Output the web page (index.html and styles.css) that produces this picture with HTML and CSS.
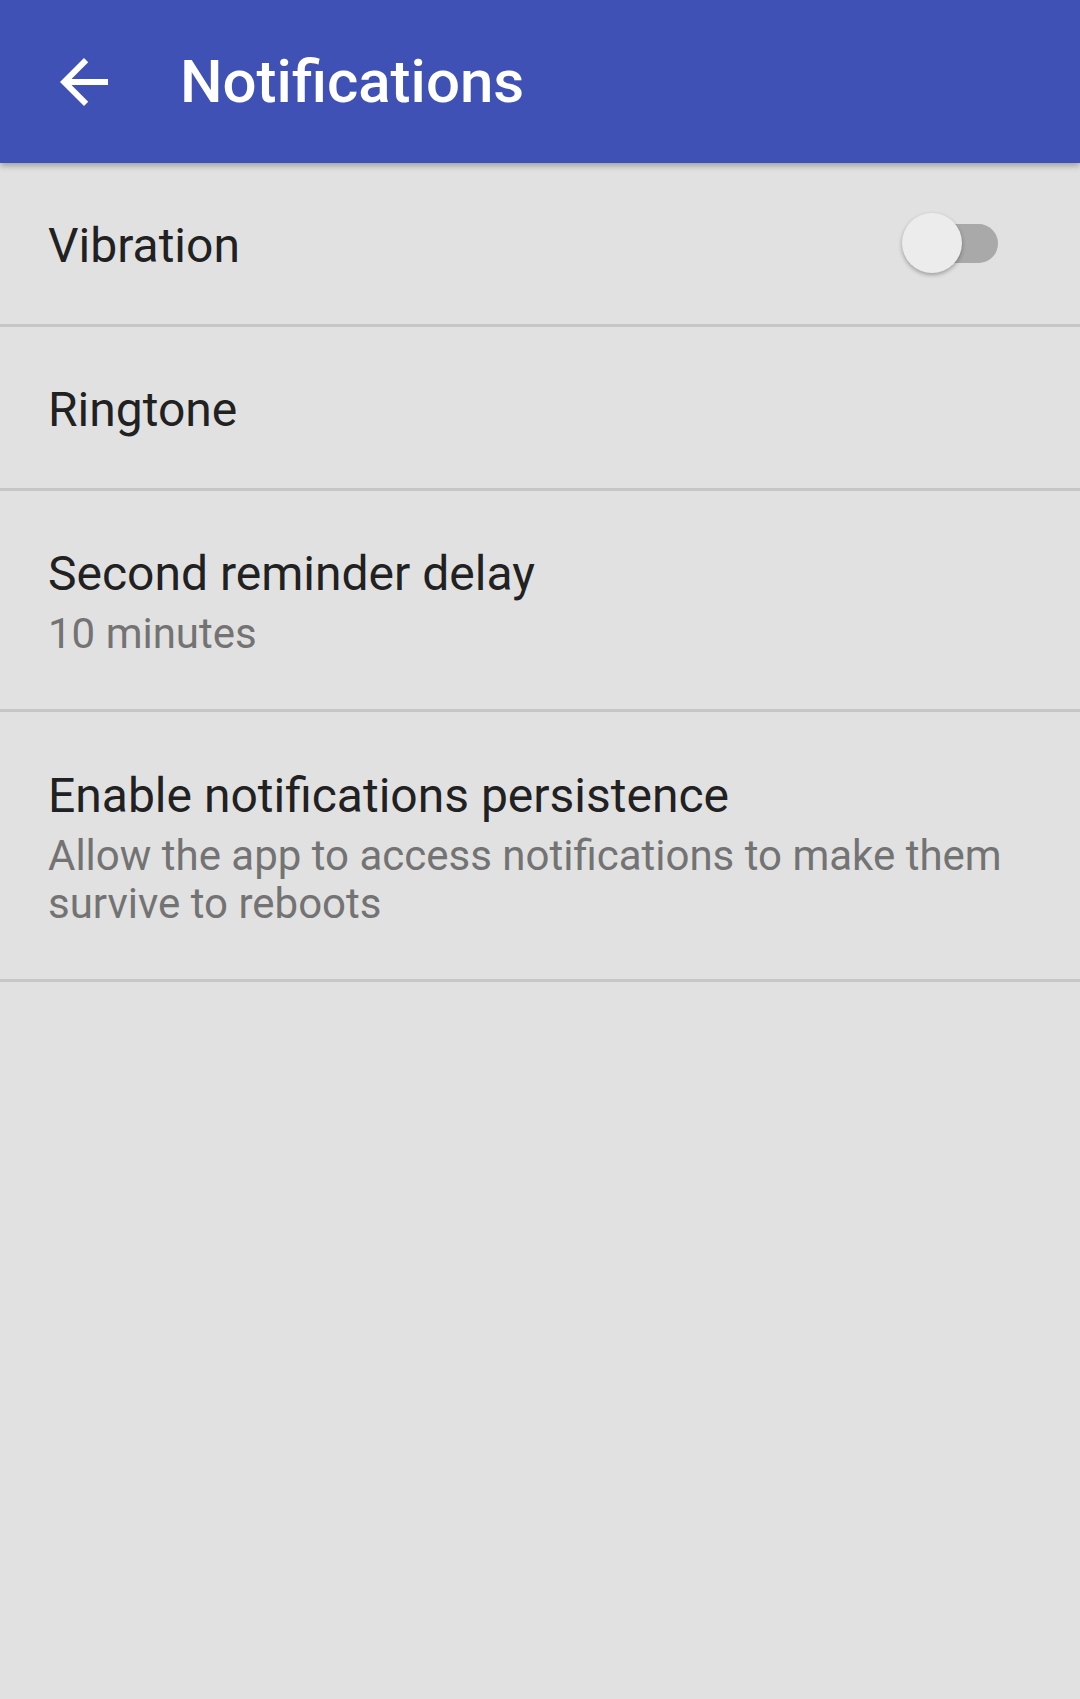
FILE: index.html
```html
<!DOCTYPE html>
<html>
<head>
<meta charset="utf-8">
<link rel="stylesheet" href="styles.css">
</head>
<body>
<header class="toolbar">
  <svg class="back" viewBox="0 0 24 24" width="72" height="72"><path fill="#fff" d="M20 11H7.83l5.59-5.59L12 4l-8 8 8 8 1.41-1.41L7.83 13H20v-2z"/></svg>
  <h1 class="title">Notifications</h1>
</header>
<main class="list">
  <div class="row row-vibration">
    <div class="text"><div class="primary">Vibration</div></div>
    <div class="switch"><div class="track"></div><div class="thumb"></div></div>
  </div>
  <div class="row row-ringtone">
    <div class="text"><div class="primary">Ringtone</div></div>
  </div>
  <div class="row row-delay">
    <div class="text"><div class="primary">Second reminder delay</div><div class="secondary">10 minutes</div></div>
  </div>
  <div class="row row-persist">
    <div class="text"><div class="primary">Enable notifications persistence</div><div class="secondary">Allow the app to access notifications to make them survive to reboots</div></div>
  </div>
</main>
</body>
</html>
```
FILE: styles.css
```css
html, body {
  margin: 0;
  padding: 0;
}
body {
  width: 1080px;
  height: 1699px;
  background: #e1e1e1;
  font-family: Roboto, "Noto Sans", sans-serif;
  overflow: hidden;
}
.toolbar {
  height: 163px;
  background: #3f51b5;
  display: flex;
  align-items: center;
  box-shadow: 0 3px 6px rgba(0,0,0,0.28);
  position: relative;
  z-index: 1;
}
.back {
  margin-left: 48px;
  flex: none;
}
.title {
  margin: 0 0 0 60px;
  color: #fff;
  font-weight: 500;
  font-size: 60px;
  letter-spacing: 0;
}
.row {
  box-sizing: border-box;
  display: flex;
  align-items: center;
  padding: 4px 82px 0 48px;
  border-bottom: 3px solid #c6c6c6;
}
.row-vibration { height: 164px; }
.row-ringtone { height: 164px; }
.row-delay { height: 221px; }
.row-persist { height: 270px; }
.text { flex: 1; min-width: 0; }
.primary {
  font-size: 48px;
  line-height: 56px;
  color: #212121;
}
.secondary {
  font-size: 42px;
  line-height: 48px;
  color: #737373;
  margin-top: 8px;
  margin-right: -40px;
}
.switch {
  position: relative;
  width: 89px;
  height: 39px;
  margin-top: -4px;
  flex: none;
}
.track {
  width: 89px;
  height: 39px;
  border-radius: 20px;
  background: #a9a9a9;
}
.thumb {
  position: absolute;
  left: -7px;
  top: -11px;
  width: 60px;
  height: 60px;
  border-radius: 50%;
  background: #ececec;
  box-shadow: 0 2px 4px rgba(0,0,0,0.3);
}
```
